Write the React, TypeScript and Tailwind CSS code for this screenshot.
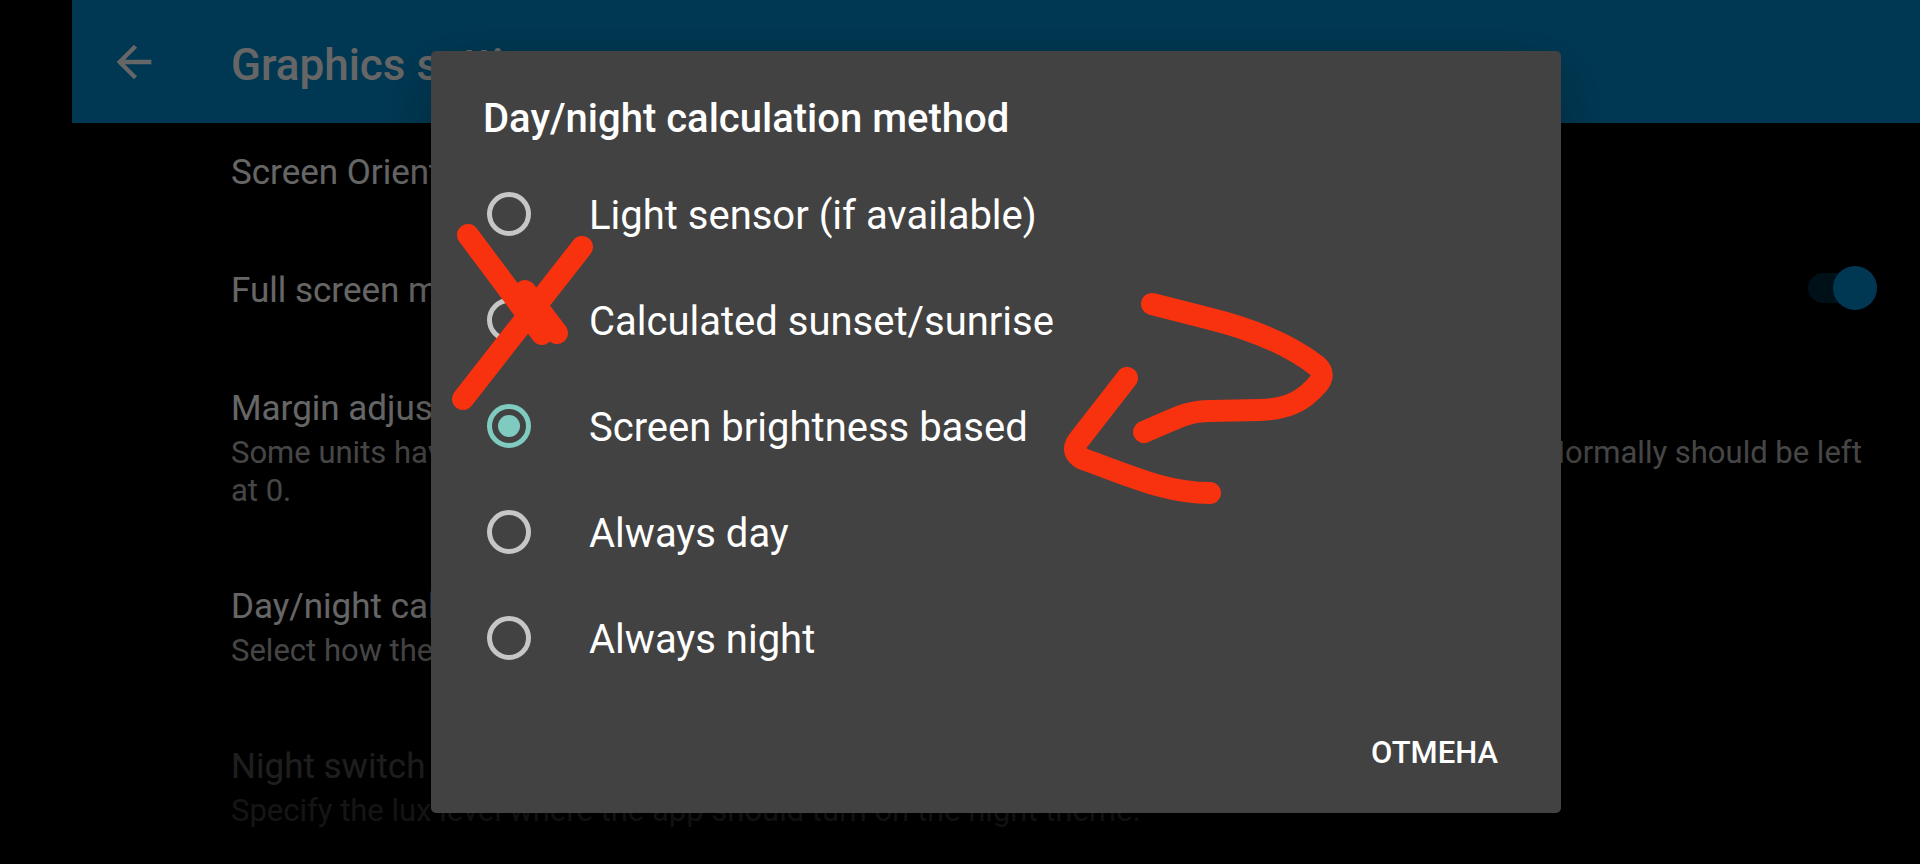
import { useState } from "react"

interface Setting {
  title: string
  summary?: string
  hasSwitch?: boolean
  disabled?: boolean
}

const settings: Setting[] = [
  { title: "Screen Orientation" },
  { title: "Full screen mode", hasSwitch: true },
  {
    title: "Margin adjustment",
    summary:
      "Some units have false margins reported by the system. You can adjust that value in pixels here. Normally should be left at 0.",
  },
  {
    title: "Day/night calculation method",
    summary: "Select how the app should switch between day and night",
  },
  {
    title: "Night switch lux level",
    summary: "Specify the lux level where the app should turn on the night theme.",
    disabled: true,
  },
]

const methods = [
  "Light sensor (if available)",
  "Calculated sunset/sunrise",
  "Screen brightness based",
  "Always day",
  "Always night",
]

function SettingRow({ title, summary, hasSwitch, disabled }: Setting) {
  const [on, setOn] = useState(true)

  return (
    <label
      className={`flex items-start justify-between pt-[29px] pr-[35px] pb-[47px] pl-[159px] ${disabled ? "opacity-30" : ""}`}
    >
      <div>
        <p className="text-[35px] leading-[42px] text-white">{title}</p>
        {summary && (
          <p className="mt-1 text-[31px] leading-[38px] text-white/70">{summary}</p>
        )}
      </div>

      {hasSwitch && (
        <span className="relative mr-2 flex h-9 w-[69px] shrink-0 items-center">
          <input
            type="checkbox"
            checked={on}
            onChange={() => setOn(!on)}
            className="peer absolute inset-0 appearance-none"
          />
          <span className="h-[30px] w-full rounded-full bg-[#002a3f]" />
          <span className="absolute -top-1 left-0 h-11 w-11 rounded-full bg-[#b9b9b9] peer-checked:left-[25px] peer-checked:bg-[#008cd0]" />
        </span>
      )}
    </label>
  )
}

function Markup() {
  return (
    <svg
      viewBox="431 51 940 460"
      className="pointer-events-none absolute top-0 left-0 h-[460px] w-[940px]"
      fill="none"
      stroke="#f8320e"
      strokeWidth="22"
      strokeLinecap="round"
      strokeLinejoin="round"
      aria-hidden="true"
    >
      {/* cross */}
      <path d="M468 235 L542 334 L525 291 L557 333" />
      <path d="M582 247 L463 399" />
      {/* arrow */}
      <path d="M1152 304 L1207 318 C1260 331 1294 348 1317 366 Q1326 374 1318 384 C1302 403 1285 409 1260 410 L1210 411 C1187 411 1177 418 1144 432" />
      <path d="M1127 378 L1078 441 Q1070 452 1083 459 C1133 477 1167 493 1210 493" />
    </svg>
  )
}

export default function App() {
  const [method, setMethod] = useState("Screen brightness based")

  return (
    <div className="relative h-screen overflow-hidden bg-black pl-[72px] font-['Roboto',sans-serif]">
      <header className="flex h-[123px] items-center bg-[#008cd0] pl-9">
        <button aria-label="Back" className="text-white">
          <svg viewBox="0 0 24 24" className="h-[52px] w-[52px]" fill="currentColor">
            <path d="M20 11H7.83l5.59-5.59L12 4l-8 8 8 8 1.41-1.41L7.83 13H20v-2z" />
          </svg>
        </button>
        <h1 className="ml-[71px] pt-1.5 text-[44px] leading-[52px] font-medium text-white">
          Graphics settings
        </h1>
      </header>

      <main>
        {settings.map((item) => (
          <SettingRow key={item.title} {...item} />
        ))}
      </main>

      {/* Dialog */}
      <div className="absolute inset-0 flex items-center justify-center bg-black/60 pl-[72px]">
        <div
          role="dialog"
          aria-labelledby="dialog-title"
          className="relative w-full max-w-[1130px] rounded-[5px] bg-[#424242] pt-11 pb-5 text-white shadow-[0_20px_60px_rgba(0,0,0,0.25)]"
        >
          <h2 id="dialog-title" className="px-[52px] text-[40px] leading-[48px] font-medium">
            Day/night calculation method
          </h2>

          <div className="mt-[18px]">
            {methods.map((name) => (
              <label key={name} className="flex h-[106px] items-center gap-[58px] px-14">
                <input
                  type="radio"
                  name="method"
                  checked={method === name}
                  onChange={() => setMethod(name)}
                  className="flex h-11 w-11 shrink-0 appearance-none items-center justify-center rounded-full border-[5px] border-[#c6c6c6] checked:border-[#80cbc0] checked:before:h-[22px] checked:before:w-[22px] checked:before:rounded-full checked:before:bg-[#80cbc0]"
                />
                <span className="pt-1 text-[40px] leading-[48px]">{name}</span>
              </label>
            ))}
          </div>

          <div className="mt-[22px] flex justify-end pr-[45px]">
            <button className="h-20 px-[18px] text-[31px] font-medium">ОТМЕНА</button>
          </div>

          <Markup />
        </div>
      </div>
    </div>
  )
}
